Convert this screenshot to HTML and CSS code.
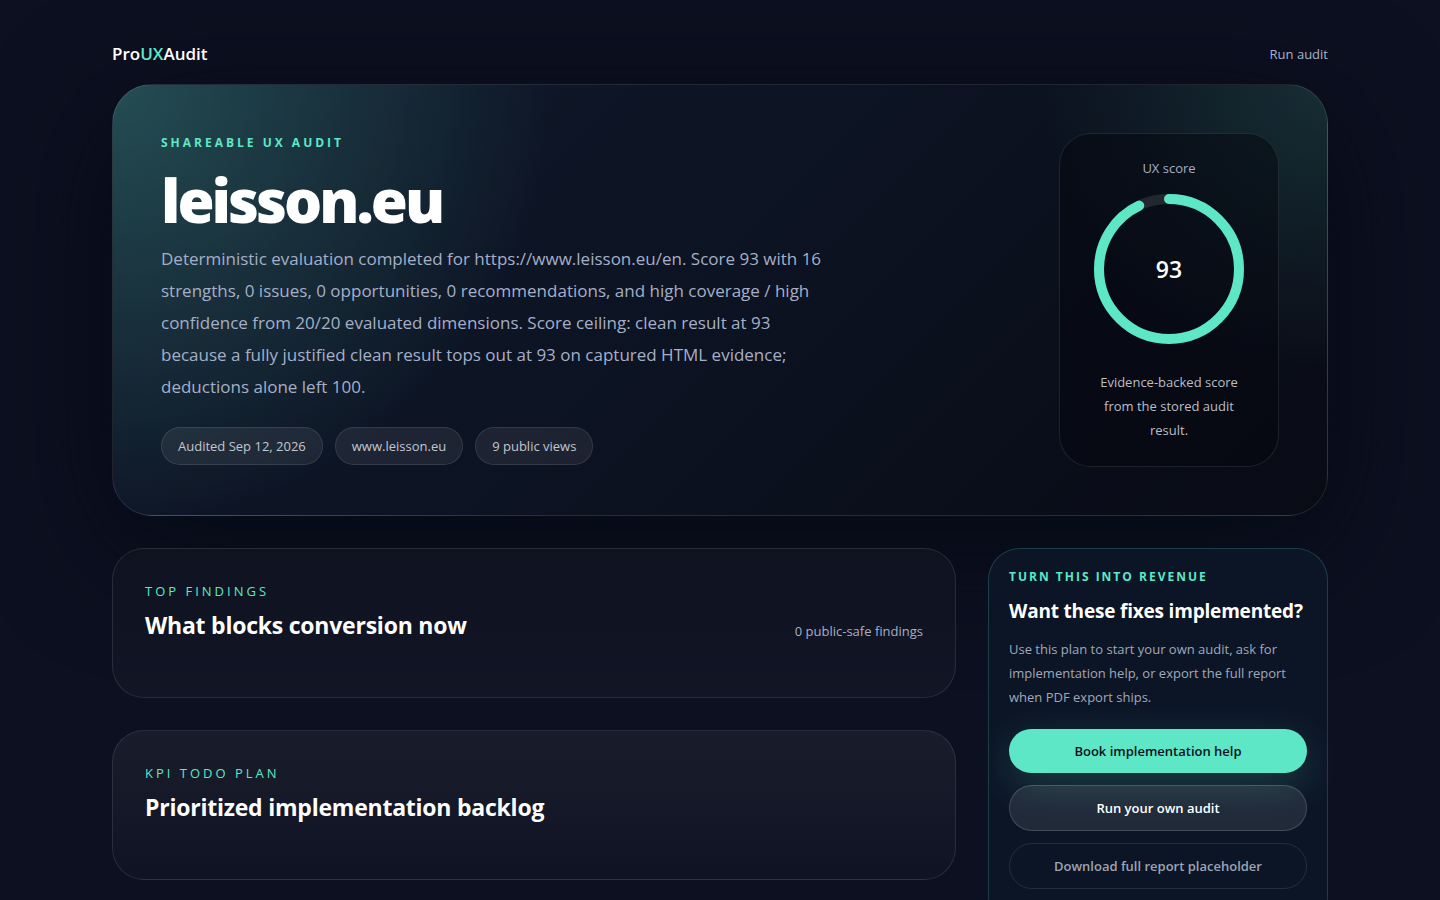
FILE: index.html
```html
<!DOCTYPE html>
<html lang="en">
<head>
<meta charset="utf-8">
<meta name="viewport" content="width=device-width, initial-scale=1">
<title>leisson.eu – ProUXAudit</title>
<link rel="stylesheet" href="styles.css">
</head>
<body>
<div class="page">
  <header class="topbar">
    <a class="brand" href="#">Pro<span class="brand-accent">UX</span>Audit</a>
    <a class="topbar-link" href="#">Run audit</a>
  </header>
  <main>
    <section class="hero">
      <div class="hero-copy">
        <p class="eyebrow eyebrow-wide">SHAREABLE UX AUDIT</p>
        <h1>leisson.eu</h1>
        <p class="summary">Deterministic evaluation completed for https://www.leisson.eu/en. Score 93 with 16 strengths, 0 issues, 0 opportunities, 0 recommendations, and high coverage / high confidence from 20/20 evaluated dimensions. Score ceiling: clean result at 93 because a fully justified clean result tops out at 93 on captured HTML evidence; deductions alone left 100.</p>
        <ul class="chips">
          <li>Audited Sep 12, 2026</li>
          <li>www.leisson.eu</li>
          <li>9 public views</li>
        </ul>
      </div>
      <div class="score">
        <p class="score-label">UX score</p>
        <div class="ring">
          <svg viewBox="0 0 150 150" width="150" height="150" aria-hidden="true">
            <circle class="ring-track" cx="75" cy="75" r="70"/>
            <circle class="ring-value" cx="75" cy="75" r="70" pathLength="100" transform="rotate(-90 75 75)"/>
          </svg>
          <strong>93</strong>
        </div>
        <p class="score-note">Evidence-backed score from the stored audit result.</p>
      </div>
    </section>
    <div class="columns">
      <div class="stack">
        <section class="card">
          <div>
            <p class="eyebrow eyebrow-light">TOP FINDINGS</p>
            <h2>What blocks conversion now</h2>
          </div>
          <p class="count">0 public-safe findings</p>
        </section>
        <section class="card card-raised">
          <div>
            <p class="eyebrow eyebrow-light">KPI TODO PLAN</p>
            <h2>Prioritized implementation backlog</h2>
          </div>
        </section>
      </div>
      <aside class="offer">
        <p class="eyebrow">TURN THIS INTO REVENUE</p>
        <h3>Want these fixes implemented?</h3>
        <p class="offer-text">Use this plan to start your own audit, ask for implementation help, or export the full report when PDF export ships.</p>
        <div class="actions">
          <a class="btn btn-primary" href="#">Book implementation help</a>
          <a class="btn btn-secondary" href="#">Run your own audit</a>
          <button class="btn btn-disabled" type="button" disabled>Download full report placeholder</button>
        </div>
      </aside>
    </div>
  </main>
</div>
</body>
</html>
```
FILE: styles.css
```css
:root {
  --mint: #5ee7c7;
  --line: rgba(255, 255, 255, 0.1);
}

* { box-sizing: border-box; }

body {
  margin: 0;
  background: #0d1020;
  color: #fff;
  font-family: "Segoe UI", "Open Sans", "Noto Sans", sans-serif;
  font-size: 13px;
  line-height: 24px;
}

h1, h2, h3, p, ul { margin: 0; padding: 0; }
a { color: inherit; text-decoration: none; }

.page {
  max-width: 1280px;
  margin: 0 auto;
  padding: 40px 32px;
}

.topbar {
  display: flex;
  align-items: center;
  justify-content: space-between;
  height: 28px;
  margin-bottom: 16px;
}
.brand {
  font-size: 17px;
  font-weight: 600;
}
.brand-accent { color: var(--mint); }
.topbar-link { color: #a9b2c9; }

.hero {
  display: grid;
  grid-template-columns: minmax(0, 1fr) 220px;
  gap: 32px;
  padding: 48px;
  border: 1px solid var(--line);
  border-radius: 40px;
  background:
    radial-gradient(circle at 0 0, rgba(94, 231, 199, 0.25), transparent 34%),
    radial-gradient(circle at 100% 0, rgba(94, 231, 199, 0.14), transparent 22%),
    linear-gradient(135deg, #111a2d 0%, #0c1322 48%, #090b15 100%);
  box-shadow: 0 30px 120px rgba(0, 8, 18, 0.75);
}

.eyebrow {
  color: var(--mint);
  font-size: 12px;
  font-weight: 700;
  line-height: 16px;
  letter-spacing: 2px;
}
.eyebrow-wide { line-height: 20px; letter-spacing: 3px; }
.eyebrow-light {
  font-size: 13px;
  font-weight: 400;
  line-height: 20px;
  letter-spacing: 3px;
}

h1 {
  margin: 16px 0 12px;
  font-size: 60px;
  font-weight: 800;
  line-height: 62px;
  letter-spacing: -3px;
}
.summary {
  max-width: 672px;
  color: #a5afc8;
  font-size: 17px;
  line-height: 32px;
}
.chips {
  display: flex;
  flex-wrap: wrap;
  gap: 12px;
  margin-top: 24px;
  list-style: none;
}
.chips li {
  padding: 8px 16px;
  border: 1px solid var(--line);
  border-radius: 24px;
  background: rgba(255, 255, 255, 0.07);
  color: #c3c6cf;
  line-height: 20px;
}

.score {
  padding: 24px;
  border: 1px solid var(--line);
  border-radius: 32px;
  background: rgba(3, 6, 14, 0.5);
  text-align: center;
}
.score-label { color: #a5afc8; line-height: 20px; }
.ring {
  display: grid;
  place-items: center;
  margin: 16px 0 26px;
}
.ring svg, .ring strong { grid-area: 1 / 1; }
.ring strong { font-size: 23px; font-weight: 600; }
.ring circle { fill: none; stroke-width: 10; }
.ring-track { stroke: rgba(255, 255, 255, 0.1); }
.ring-value {
  stroke: var(--mint);
  stroke-linecap: round;
  stroke-dasharray: 93 100;
}
.score-note { color: #bcbec6; }

.columns {
  display: grid;
  grid-template-columns: minmax(0, 1fr) 340px;
  align-items: start;
  gap: 32px;
  margin-top: 32px;
}
.stack { display: grid; gap: 32px; }

.card {
  display: flex;
  align-items: flex-end;
  justify-content: space-between;
  gap: 16px;
  padding: 32px 32px 56px;
  border: 1px solid var(--line);
  border-radius: 32px;
  background: linear-gradient(#0f1320, #121525);
}
.card-raised { background: linear-gradient(#191d2b, #101324); }
h2 {
  margin-top: 8px;
  font-size: 23px;
  font-weight: 700;
  line-height: 32px;
  letter-spacing: -0.01em;
}
.count { color: #a5afc8; line-height: 20px; }

.offer {
  padding: 20px;
  border: 1px solid rgba(94, 231, 199, 0.2);
  border-radius: 32px;
  background: #0c1526;
}
h3 {
  margin: 12px 0;
  font-size: 19px;
  font-weight: 700;
  line-height: 28px;
  letter-spacing: -0.01em;
}
.offer-text { color: #a1a8b8; }
.actions {
  display: grid;
  gap: 12px;
  margin: 20px 0;
}
.btn {
  display: block;
  width: 100%;
  padding: 12px 20px;
  border: 1px solid transparent;
  border-radius: 24px;
  font: inherit;
  font-weight: 600;
  line-height: 20px;
  text-align: center;
}
.btn-primary {
  border: 0;
  background: var(--mint);
  color: #07111c;
  box-shadow: 0 12px 40px rgba(94, 231, 199, 0.2);
}
.btn-secondary {
  border-color: rgba(255, 255, 255, 0.16);
  background: rgba(255, 255, 255, 0.09);
}
.btn-disabled {
  border-color: var(--line);
  background: transparent;
  color: #9ca4b3;
}
```
